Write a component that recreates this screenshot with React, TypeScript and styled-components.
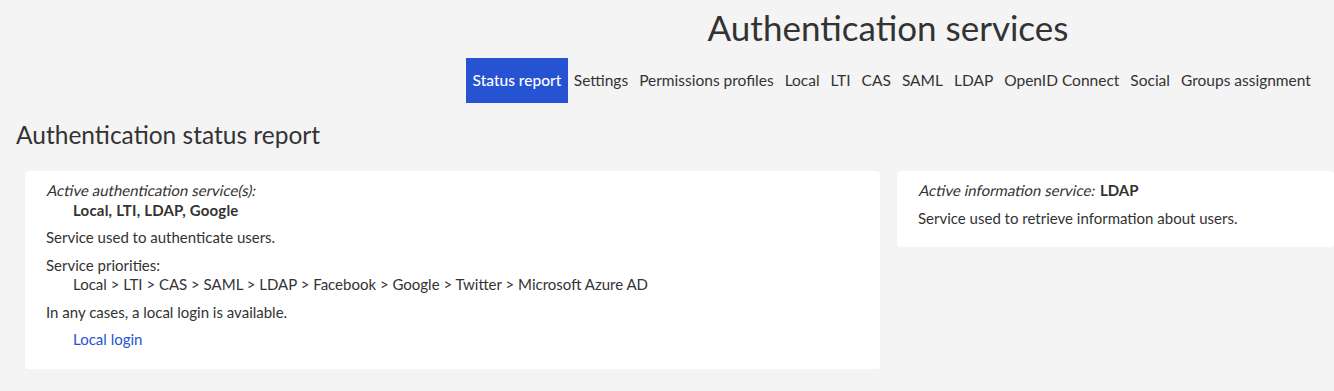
import React from 'react'
import styled, { createGlobalStyle } from 'styled-components'

const GlobalStyle = createGlobalStyle`
    html, body {
        margin:0;
        padding:0;
        background:#f4f4f4;
    }
    body {
        font-family: Lato, "Open Sans", sans-serif;
        color:#333;
        overflow:hidden;
    }
`

const Header = styled.header`
    margin-left:442px;
    text-align:center;
    padding-top:6px;
`

const Title = styled.h1`
    margin:0 0 10px 0;
    font:normal 35px/42px Lato, sans-serif;
    color:#333;
`

const Tabs = styled.nav`
    display:flex;
    justify-content:center;
    padding-left:6px;
`

const Tab = styled.a<{ $active?: boolean }>`
    display:block;
    padding:0 ${p => (p.$active ? '7px' : '5.5px')};
    height:45px;
    line-height:45px;
    font-size:15.5px;
    font-weight:${p => (p.$active ? 500 : 400)};
    text-decoration:none;
    cursor:pointer;
    color:${p => (p.$active ? '#fff' : '#333')};
    background:${p => (p.$active ? '#2653d2' : 'transparent')};
`

const PageTitle = styled.h2`
    margin:17px 0 0 16px;
    font:normal 24.5px/30px Lato, sans-serif;
    color:#333;
`

const Cards = styled.div`
    display:grid;
    grid-template-columns:855px 1fr;
    gap:17px;
    align-items:start;
    margin:21px 0 0 25px;
`

const Card = styled.section`
    background:#fff;
    border-radius:4px;
    padding:10px 21px 19px 21px;
    font-size:15px;
    line-height:19.5px;
`

const Item = styled.div`
    margin-bottom:8px;
`

/* slanted regular face, as the page shows it */
const Label = styled.span`
    display:inline-block;
    transform:skewX(-12deg);
    transform-origin:0 80%;
`

const Value = styled.div<{ $strong?: boolean }>`
    padding-left:27px;
    font-weight:${p => (p.$strong ? 700 : 400)};
    letter-spacing:${p => (p.$strong ? '0.2px' : '0')};
`

const Strong = styled.span`
    font-weight:700;
    margin-left:2px;
`

const Text = styled.p`
    margin:0 0 8px 0;
    &:last-child {
        margin-bottom:0;
    }
`

const LoginLink = styled.a`
    display:block;
    padding-left:27px;
    color:#2653d2;
    text-decoration:none;
    cursor:pointer;
`

const tabs = [
    'Status report',
    'Settings',
    'Permissions profiles',
    'Local',
    'LTI',
    'CAS',
    'SAML',
    'LDAP',
    'OpenID Connect',
    'Social',
    'Groups assignment',
]

const App: React.FC = () => {
    return (
        <>
            <GlobalStyle />
            <Header>
                <Title>Authentication services</Title>
                <Tabs>
                    {tabs.map((t, i) => (
                        <Tab key={t} $active={i === 0}>{t}</Tab>
                    ))}
                </Tabs>
            </Header>
            <PageTitle>Authentication status report</PageTitle>
            <Cards>
                <Card>
                    <Item>
                        <Label>Active authentication service(s):</Label>
                        <Value $strong>Local, LTI, LDAP, Google</Value>
                    </Item>
                    <Text>Service used to authenticate users.</Text>
                    <Item>
                        <div>Service priorities:</div>
                        <Value>Local &gt; LTI &gt; CAS &gt; SAML &gt; LDAP &gt; Facebook &gt; Google &gt; Twitter &gt; Microsoft Azure AD</Value>
                    </Item>
                    <Text>In any cases, a local login is available.</Text>
                    <LoginLink>Local login</LoginLink>
                </Card>
                <Card>
                    <Item>
                        <Label>Active information service:</Label> <Strong>LDAP</Strong>
                    </Item>
                    <Text>Service used to retrieve information about users.</Text>
                </Card>
            </Cards>
        </>
    )
}

export default App
